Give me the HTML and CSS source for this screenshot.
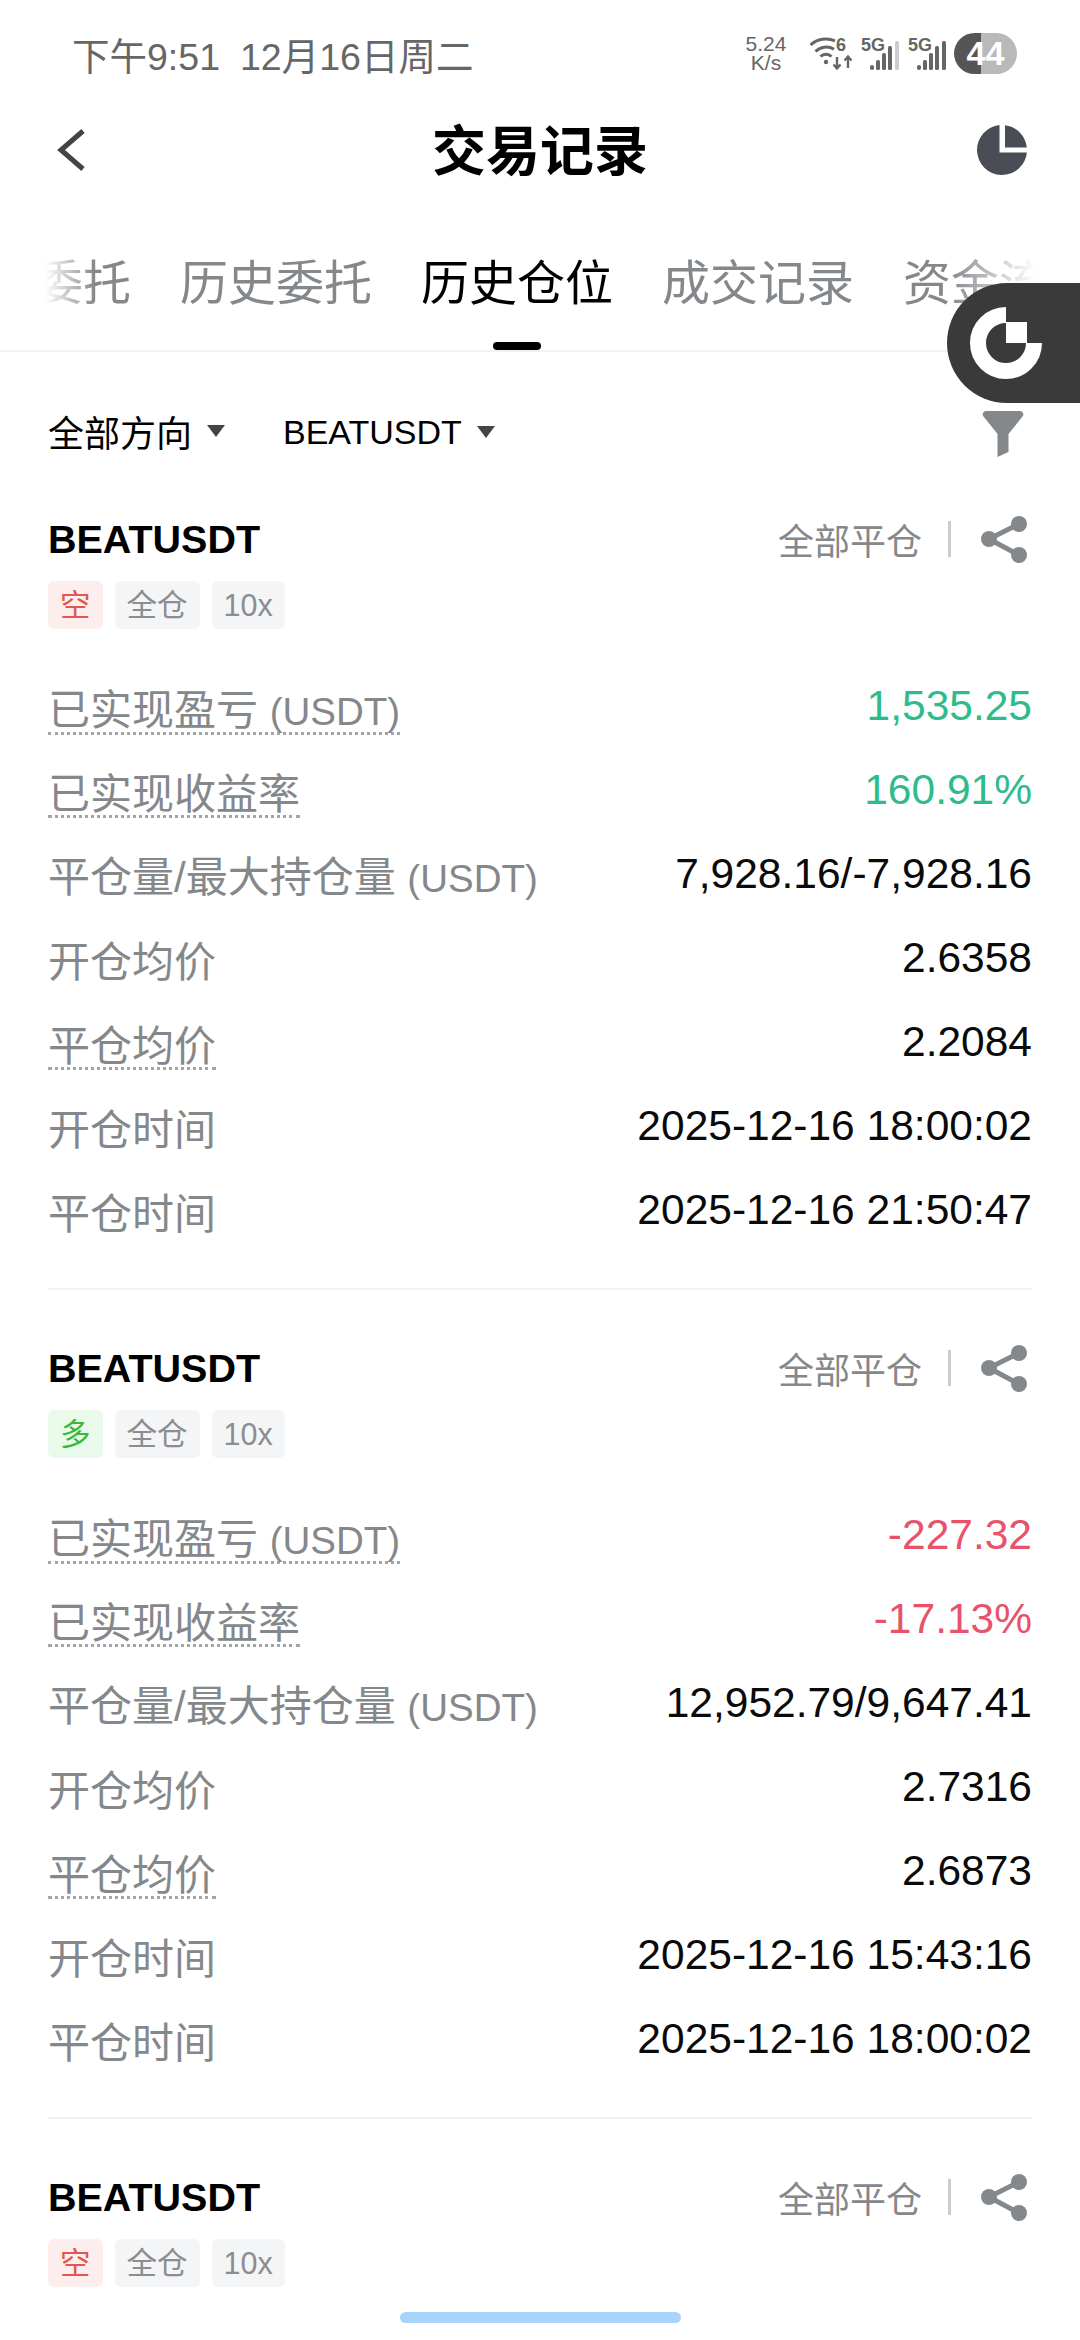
FILE: index.html
```html
<!DOCTYPE html>
<html lang="zh">
<head>
<meta charset="UTF-8">
<meta name="viewport" content="width=device-width, initial-scale=1.0">
<title>交易记录</title>
<link rel="stylesheet" href="styles.css">
</head>
<body>

<div class="status-bar">
  <div class="status-time"><span>下午9:51</span><span>12月16日周二</span></div>
  <div class="status-icons">
    <div class="net-speed">5.24<br>K/s</div>
    <svg class="net-icons" width="140" height="44" viewBox="0 0 140 44">
      <g fill="none" stroke="#666" stroke-width="3">
        <path d="M0.5 14A23 23 0 0 1 25 9.8"/>
        <path d="M5.5 20.5A15 15 0 0 1 24 18.3"/>
        <path d="M10.5 25.5A8 8 0 0 1 21.5 25.5"/>
      </g>
      <circle cx="16" cy="31" r="2.2" fill="#666"/>
      <text class="net-text" x="26" y="20">6</text>
      <path d="M27 26V37M23.5 33.5L27 37.5L30.5 33.5M38 37V26M34.5 29.5L38 25.5L41.5 29.5" fill="none" stroke="#666" stroke-width="2.4"/>
      <text class="net-text" x="51" y="20">5G</text>
      <g fill="#666">
        <rect x="60" y="34" width="4" height="5" rx="2"/>
        <rect x="66" y="29" width="4" height="10" rx="1.6"/>
        <rect x="72" y="22" width="4" height="17" rx="1.6"/>
        <rect x="78" y="15" width="4" height="24" rx="1.6"/>
        <rect x="85" y="10" width="4" height="29" rx="1.6" fill="#ccc"/>
      </g>
      <text class="net-text" x="98" y="20">5G</text>
      <g fill="#666">
        <rect x="107" y="34" width="4" height="5" rx="2"/>
        <rect x="113" y="29" width="4" height="10" rx="1.6"/>
        <rect x="119" y="22" width="4" height="17" rx="1.6"/>
        <rect x="125" y="15" width="4" height="24" rx="1.6"/>
        <rect x="132" y="10" width="4" height="29" rx="1.6"/>
      </g>
    </svg>
    <div class="battery">44</div>
  </div>
</div>

<div class="nav-bar">
  <svg width="30" height="44" viewBox="0 0 30 44"><path d="M26 3L4 22L26 41" fill="none" stroke="#444" stroke-width="5"/></svg>
  <div class="nav-title">交易记录</div>
  <svg width="50" height="50" viewBox="0 0 50 50">
    <path d="M22.5 0.1V27.5H49.9A25 25 0 1 1 22.5 0.1Z" fill="#4a4d55"/>
    <path d="M28 0.2A25 25 0 0 1 49.8 22.5H28Z" fill="#4a4d55"/>
  </svg>
</div>

<div class="tabs">
  <div class="tab-list">
    <div class="tab tab-first">当前委托</div>
    <div class="tab">历史委托</div>
    <div class="tab tab-active">历史仓位<i class="tab-mark"></i></div>
    <div class="tab">成交记录</div>
    <div class="tab">资金流水</div>
  </div>
</div>

<div class="float-btn">
  <svg width="80" height="80" viewBox="0 0 80 80">
    <path d="M40 12A28 28 0 1 0 68 40" fill="none" stroke="#fff" stroke-width="16"/>
    <rect x="40" y="19" width="21" height="21" fill="#fff"/>
  </svg>
</div>

<div class="content">
  <div class="filter-row">
    <div class="filter-item">全部方向<i class="caret"></i></div>
    <div class="filter-item filter-symbol">BEATUSDT<i class="caret"></i></div>
    <svg class="filter-icon" width="42" height="46" viewBox="0 0 42 46"><path d="M4 0H38A3.4 3.4 0 0 1 40.5 5.6L26.5 23V41L15.5 46V23L1.5 5.6A3.4 3.4 0 0 1 4 0Z" fill="#85888b"/></svg>
  </div>

  <div class="card">
    <div class="card-head">
      <div>
        <div class="symbol">BEATUSDT</div>
        <div class="tags"><span class="tag tag-short">空</span><span class="tag">全仓</span><span class="tag">10x</span></div>
      </div>
      <div class="actions">
        <span>全部平仓</span><i class="action-line"></i>
        <svg width="48" height="48" viewBox="0 0 48 48"><path d="M38 9L8 24L38 40" fill="none" stroke="#85888b" stroke-width="5"/><circle cx="38" cy="9" r="8" fill="#85888b"/><circle cx="8" cy="24" r="8" fill="#85888b"/><circle cx="38" cy="40" r="8" fill="#85888b"/></svg>
      </div>
    </div>
    <div class="rows">
      <div class="row"><span class="label dotted">已实现盈亏 <small class="unit">(USDT)</small></span><span class="value up">1,535.25</span></div>
      <div class="row"><span class="label dotted">已实现收益率</span><span class="value up">160.91%</span></div>
      <div class="row"><span class="label">平仓量/最大持仓量 <small class="unit">(USDT)</small></span><span class="value">7,928.16/-7,928.16</span></div>
      <div class="row"><span class="label">开仓均价</span><span class="value">2.6358</span></div>
      <div class="row"><span class="label dotted">平仓均价</span><span class="value">2.2084</span></div>
      <div class="row"><span class="label">开仓时间</span><span class="value">2025-12-16 18:00:02</span></div>
      <div class="row"><span class="label">平仓时间</span><span class="value">2025-12-16 21:50:47</span></div>
    </div>
  </div>

  <div class="card">
    <div class="card-head">
      <div>
        <div class="symbol">BEATUSDT</div>
        <div class="tags"><span class="tag tag-long">多</span><span class="tag">全仓</span><span class="tag">10x</span></div>
      </div>
      <div class="actions">
        <span>全部平仓</span><i class="action-line"></i>
        <svg width="48" height="48" viewBox="0 0 48 48"><path d="M38 9L8 24L38 40" fill="none" stroke="#85888b" stroke-width="5"/><circle cx="38" cy="9" r="8" fill="#85888b"/><circle cx="8" cy="24" r="8" fill="#85888b"/><circle cx="38" cy="40" r="8" fill="#85888b"/></svg>
      </div>
    </div>
    <div class="rows">
      <div class="row"><span class="label dotted">已实现盈亏 <small class="unit">(USDT)</small></span><span class="value down">-227.32</span></div>
      <div class="row"><span class="label dotted">已实现收益率</span><span class="value down">-17.13%</span></div>
      <div class="row"><span class="label">平仓量/最大持仓量 <small class="unit">(USDT)</small></span><span class="value">12,952.79/9,647.41</span></div>
      <div class="row"><span class="label">开仓均价</span><span class="value">2.7316</span></div>
      <div class="row"><span class="label dotted">平仓均价</span><span class="value">2.6873</span></div>
      <div class="row"><span class="label">开仓时间</span><span class="value">2025-12-16 15:43:16</span></div>
      <div class="row"><span class="label">平仓时间</span><span class="value">2025-12-16 18:00:02</span></div>
    </div>
  </div>

  <div class="card card-last">
    <div class="card-head">
      <div>
        <div class="symbol">BEATUSDT</div>
        <div class="tags"><span class="tag tag-short">空</span><span class="tag">全仓</span><span class="tag">10x</span></div>
      </div>
      <div class="actions">
        <span>全部平仓</span><i class="action-line"></i>
        <svg width="48" height="48" viewBox="0 0 48 48"><path d="M38 9L8 24L38 40" fill="none" stroke="#85888b" stroke-width="5"/><circle cx="38" cy="9" r="8" fill="#85888b"/><circle cx="8" cy="24" r="8" fill="#85888b"/><circle cx="38" cy="40" r="8" fill="#85888b"/></svg>
      </div>
    </div>
  </div>
</div>

<div class="home-bar"></div>

</body>
</html>
```

FILE: styles.css
```css
* {
  box-sizing: border-box;
}
html, body {
  margin: 0;
  height: 2340px;
  overflow: hidden;
}
body {
  position: relative;
  width: 1080px;
  background-color: #fff;
  font-family: "Liberation Sans", "Noto Sans CJK SC", sans-serif;
  color: #000;
}
i {
  display: block;
}

/* status bar */
.status-bar {
  display: flex;
  justify-content: space-between;
  align-items: center;
  height: 110px;
  padding: 0 63px 0 72px;
  color: #666;
}
.status-time {
  display: flex;
  gap: 20px;
  padding-bottom: 3px;
  font-size: 37.5px;
}
.status-icons {
  display: flex;
  align-items: center;
  padding-bottom: 4px;
}
.net-speed {
  width: 42px;
  margin-right: 23px;
  font-size: 21px;
  line-height: 19px;
  text-align: center;
  white-space: nowrap;
}
.net-icons {
  margin-right: 4px;
}
.net-text {
  font-size: 18px;
  font-weight: bold;
  fill: #666;
}
.battery {
  width: 63px;
  height: 41px;
  border-radius: 21px;
  background: linear-gradient(to right, #555 43%, #b9b9b9 43%);
  color: #fff;
  font-size: 34px;
  font-weight: bold;
  line-height: 41px;
  text-align: center;
}

/* nav */
.nav-bar {
  display: flex;
  justify-content: space-between;
  align-items: center;
  height: 80px;
  padding: 0 53px 0 57px;
}
.nav-title {
  margin: 0 0 5px 16px;
  font-size: 54px;
  font-weight: bold;
}

/* tabs */
.tabs {
  height: 162px;
  padding-top: 64px;
  border-bottom: 2px solid #f2f2f2;
}
.tab-list {
  display: flex;
  gap: 49px;
  overflow: hidden;
  -webkit-mask-image: linear-gradient(to right, transparent 45px, #000 95px, #000 950px, transparent 1035px);
  mask-image: linear-gradient(to right, transparent 45px, #000 95px, #000 950px, transparent 1035px);
}
.tab {
  flex: none;
  display: flex;
  flex-direction: column;
  align-items: center;
  font-size: 48px;
  line-height: 60px;
  color: #85888b;
}
.tab-first {
  margin-left: -61px;
}
.tab-active {
  color: #000;
}
.tab-mark {
  width: 48px;
  height: 8px;
  margin-top: 28px;
  border-radius: 4px;
  background-color: #000;
}

/* floating button */
.float-btn {
  position: absolute;
  top: 283px;
  right: 0;
  display: flex;
  align-items: center;
  width: 133px;
  height: 120px;
  padding-left: 19px;
  border-radius: 60px 0 0 60px;
  background-color: #3a3a3a;
}

.content {
  padding: 0 48px;
}

/* filters */
.filter-row {
  display: flex;
  align-items: center;
  height: 160px;
}
.filter-item {
  display: flex;
  align-items: center;
  gap: 15px;
  padding-bottom: 2px;
  font-size: 36px;
}
.filter-symbol {
  margin-left: 58px;
  padding-bottom: 0;
  font-size: 34px;
}
.caret {
  width: 0;
  height: 0;
  border-left: 9px solid transparent;
  border-right: 9px solid transparent;
  border-top: 12px solid #444;
}
.filter-icon {
  margin: 3px 8px 0 auto;
}

/* cards */
.card {
  margin-bottom: 51px;
  padding-bottom: 32px;
  border-bottom: 2px solid #f2f2f2;
}
.card-last {
  border-bottom: none;
}
.card-head {
  display: flex;
  justify-content: space-between;
  align-items: flex-start;
}
.symbol {
  padding-top: 1px;
  font-size: 39.5px;
  font-weight: bold;
  line-height: 52px;
}
.tags {
  display: flex;
  gap: 12px;
  margin-top: 16px;
}
.tag {
  height: 48px;
  padding: 0 12px;
  border-radius: 6px;
  background-color: #f4f5f7;
  color: #8b8d90;
  font-size: 30.5px;
  line-height: 48px;
}
.tag-short {
  background-color: #fdeeee;
  color: #e0584f;
}
.tag-long {
  background-color: #eafaea;
  color: #35b93c;
}
.actions {
  display: flex;
  align-items: center;
  height: 52px;
  margin-top: 1px;
  color: #85888b;
  font-size: 36px;
}
.action-line {
  width: 3px;
  height: 36px;
  margin: 0 30px 0 26px;
  background-color: #ccc;
}
.actions svg {
  margin-right: 3px;
}
.rows {
  margin-top: 39px;
}
.row {
  display: flex;
  justify-content: space-between;
  align-items: center;
  height: 84px;
}
.label {
  margin-top: 1px;
  color: #85888b;
  font-size: 42px;
  line-height: 42px;
}
.unit {
  font-size: 38.5px;
}
.dotted {
  margin-top: 5px;
  line-height: 40px;
  border-bottom: 3px dotted #a3a5a8;
}
.value {
  margin-bottom: 8px;
  color: #0a0a0a;
  font-size: 42.5px;
  line-height: 48px;
}
.up {
  color: #2fbb8b;
}
.down {
  color: #e8526a;
}

.home-bar {
  position: absolute;
  left: 400px;
  top: 2312px;
  width: 281px;
  height: 11px;
  border-radius: 6px;
  background-color: #a8d4fb;
}
```
